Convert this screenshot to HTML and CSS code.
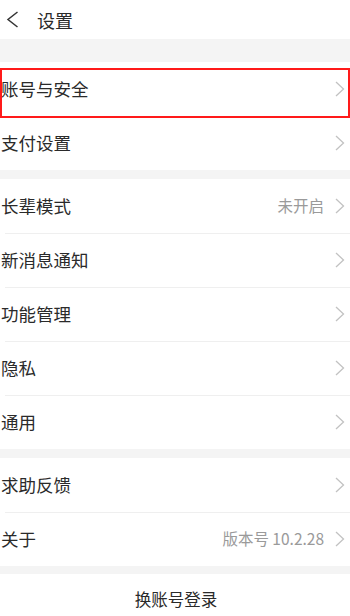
FILE: index.html
```html
<!DOCTYPE html>
<html lang="zh-CN">
<head>
<meta charset="utf-8">
<title>设置</title>
<link rel="stylesheet" href="styles.css">
</head>
<body>
<div class="page">
  <header class="topbar">
    <svg class="back" width="13" height="17" viewBox="0 0 13 17"><path d="M11.5 1 L2 8.5 L11.5 16" fill="none" stroke="#333" stroke-width="1.5"/></svg>
    <span class="title">设置</span>
  </header>
  <div class="band band-top"></div>
  <section class="group">
    <div class="row"><span class="label">账号与安全</span><span class="chev"><svg width="10" height="16" viewBox="0 0 10 16"><path d="M1 1 L8.5 8 L1 15" fill="none" stroke="#c2c2c2" stroke-width="1.3"/></svg></span></div>
    <div class="row"><span class="label">支付设置</span><span class="chev"><svg width="10" height="16" viewBox="0 0 10 16"><path d="M1 1 L8.5 8 L1 15" fill="none" stroke="#c2c2c2" stroke-width="1.3"/></svg></span></div>
    <div class="highlight"></div>
  </section>
  <div class="band"></div>
  <section class="group">
    <div class="row"><span class="label">长辈模式</span><span class="value">未开启</span><span class="chev"><svg width="10" height="16" viewBox="0 0 10 16"><path d="M1 1 L8.5 8 L1 15" fill="none" stroke="#c2c2c2" stroke-width="1.3"/></svg></span></div>
    <div class="row"><span class="label">新消息通知</span><span class="chev"><svg width="10" height="16" viewBox="0 0 10 16"><path d="M1 1 L8.5 8 L1 15" fill="none" stroke="#c2c2c2" stroke-width="1.3"/></svg></span></div>
    <div class="row"><span class="label">功能管理</span><span class="chev"><svg width="10" height="16" viewBox="0 0 10 16"><path d="M1 1 L8.5 8 L1 15" fill="none" stroke="#c2c2c2" stroke-width="1.3"/></svg></span></div>
    <div class="row"><span class="label">隐私</span><span class="chev"><svg width="10" height="16" viewBox="0 0 10 16"><path d="M1 1 L8.5 8 L1 15" fill="none" stroke="#c2c2c2" stroke-width="1.3"/></svg></span></div>
    <div class="row"><span class="label">通用</span><span class="chev"><svg width="10" height="16" viewBox="0 0 10 16"><path d="M1 1 L8.5 8 L1 15" fill="none" stroke="#c2c2c2" stroke-width="1.3"/></svg></span></div>
  </section>
  <div class="band"></div>
  <section class="group">
    <div class="row"><span class="label">求助反馈</span><span class="chev"><svg width="10" height="16" viewBox="0 0 10 16"><path d="M1 1 L8.5 8 L1 15" fill="none" stroke="#c2c2c2" stroke-width="1.3"/></svg></span></div>
    <div class="row"><span class="label">关于</span><span class="value">版本号 10.2.28</span><span class="chev"><svg width="10" height="16" viewBox="0 0 10 16"><path d="M1 1 L8.5 8 L1 15" fill="none" stroke="#c2c2c2" stroke-width="1.3"/></svg></span></div>
  </section>
  <div class="band band-small"></div>
  <div class="switch">换账号登录</div>
</div>
</body>
</html>
```
FILE: styles.css
```css
* { box-sizing: border-box; }
html, body { margin: 0; padding: 0; background: #fff; }
body {
  font-family: "Noto Sans CJK SC", "Noto Sans", Roboto, sans-serif;
  color: #2a2a2a;
  width: 350px;
  height: 616px;
  overflow: hidden;
}
.page { display: flex; flex-direction: column; }
.topbar {
  height: 39px;
  display: flex;
  align-items: center;
}
.back { margin-left: 6px; flex: none; }
.title {
  margin-left: 18px;
  font-size: 18px;
  color: #2a2a2a;
  line-height: 1;
}
.band { height: 9px; background: #f4f4f4; }
.band-top { height: 23px; }
.band-small { height: 8px; }
.group { position: relative; display: flex; flex-direction: column; }
.row {
  height: 54px;
  display: flex;
  align-items: center;
  padding: 0 5px 0 1px;
  position: relative;
}
.row + .row::before {
  content: "";
  position: absolute;
  left: 5px;
  right: 0;
  top: 0;
  height: 1px;
  background: #efefef;
}
.label { font-size: 17.5px; line-height: 1; flex: 1; color: #2a2a2a; }
.value { font-size: 15.5px; color: #9a9a9a; margin-right: 11px; line-height: 1; }
.chev { display: flex; align-items: center; }
.highlight {
  position: absolute;
  left: 0;
  top: 6px;
  width: 350px;
  height: 50px;
  border: 2.5px solid #ff1a1a;
  pointer-events: none;
}
.switch {
  height: 50px;
  display: flex;
  align-items: center;
  justify-content: center;
  font-size: 16.5px;
  color: #2a2a2a;
  padding-left: 2px;
}
```
